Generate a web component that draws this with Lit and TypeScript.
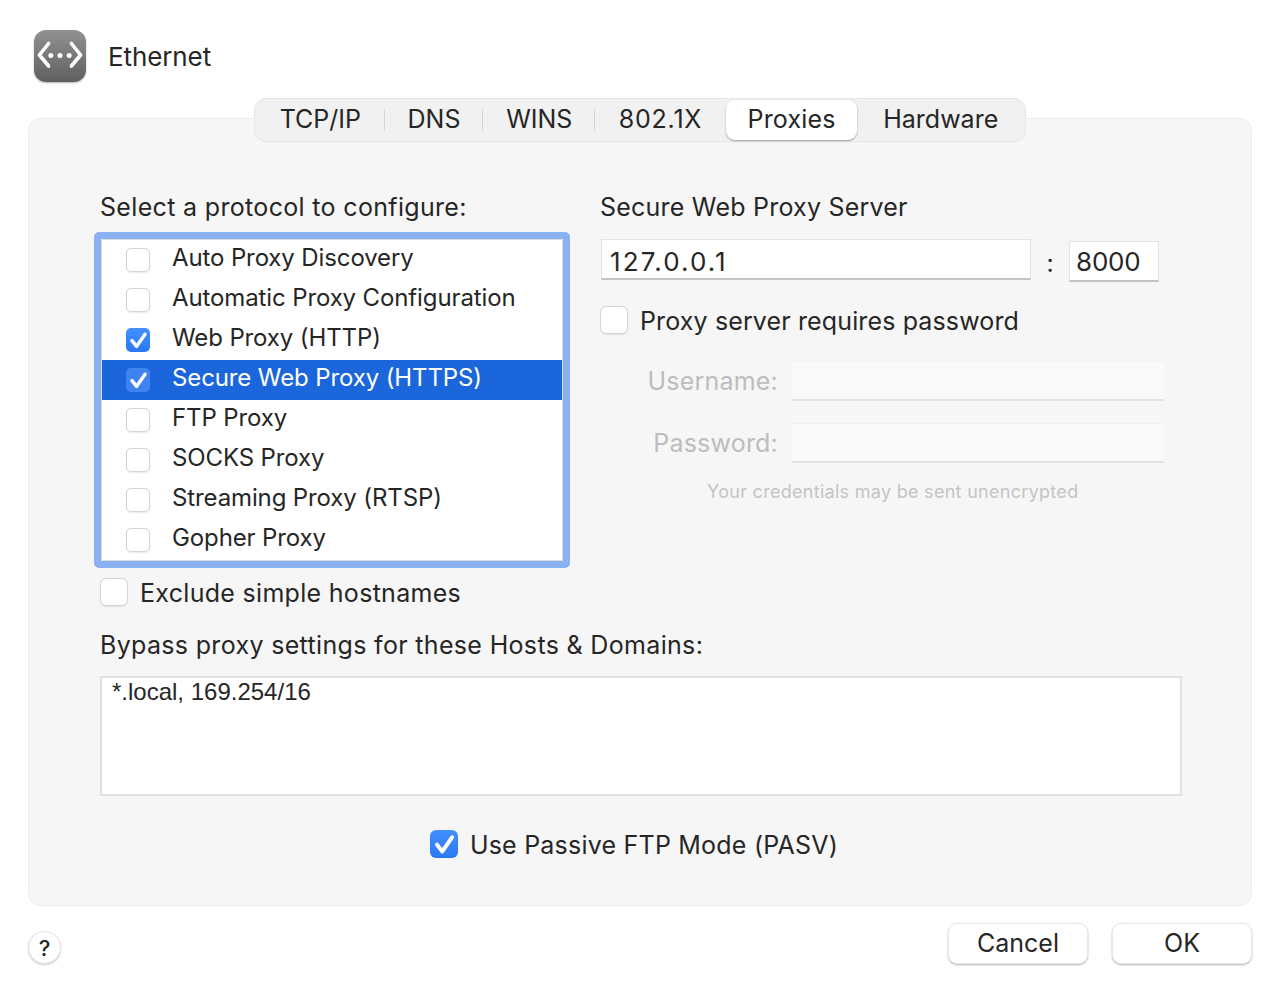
import { LitElement, html, css, svg } from "lit";
import { customElement } from "lit/decorators.js";

const tabs = ["TCP/IP", "DNS", "WINS", "802.1X", "Proxies", "Hardware"];
const protocols: [string, boolean][] = [
  ["Auto Proxy Discovery", false],
  ["Automatic Proxy Configuration", false],
  ["Web Proxy (HTTP)", true],
  ["Secure Web Proxy (HTTPS)", true],
  ["FTP Proxy", false],
  ["SOCKS Proxy", false],
  ["Streaming Proxy (RTSP)", false],
  ["Gopher Proxy", false],
];

const check = svg`<svg viewBox="0 0 24 24" class="tick"><path d="M6 12.6 L10.6 18.4 L19 6.2" fill="none" stroke="#fff" stroke-width="3.4" stroke-linecap="round" stroke-linejoin="round"/></svg>`;

@customElement("app-root")
export class AppRoot extends LitElement {
  static styles = css`
    :host { display: block; width: 1288px; height: 992px; background: #fff; color: #262626; font-family: Inter, "Noto Sans", sans-serif; font-size: 25px; overflow: hidden; }
    * { box-sizing: border-box; }
    .page { display: flex; flex-direction: column; height: 992px; padding: 30px 36px 0 28px; }
    .head { display: flex; align-items: center; gap: 22px; height: 52px; padding-left: 6px; margin-bottom: 36px; font-size: 26px; }
    .head div { padding-top: 1px; letter-spacing: -0.1px; }
    .icon { width: 52px; height: 52px; border-radius: 12px; background: linear-gradient(#929292, #5f5f5f); box-shadow: 0 1px 2px rgba(0,0,0,.3); display: block; }
    .panel { width: 1224px; height: 788px; background: #f6f6f6; border: 1px solid #ececec; border-radius: 12px; display: flex; flex-direction: column; align-items: center; }
    .tabs { margin-top: -21px; width: 772px; height: 44px; flex: none; display: flex; align-items: center; background: #f1f1f1; border: 1px solid #e6e6e6; border-radius: 12px; padding: 0 1px; }
    .tab { height: 40px; display: flex; align-items: center; justify-content: center; position: relative; line-height: 1; padding-bottom: 2px; }
    .tab.sep::after { content: ""; position: absolute; right: 0; top: 9px; height: 22px; width: 1px; background: #d6d6d6; }
    .tab.wide { letter-spacing: .8px; }
    .tab.on { background: #fff; border-radius: 9px; box-shadow: 0 1px 2px rgba(0,0,0,.35); letter-spacing: .2px; }
    .body { width: 100%; display: grid; grid-template-columns: 500px 1fr; padding: 50px 0 0 71px; }
    .title { height: 30px; line-height: 30px; white-space: nowrap; letter-spacing: .33px; }
    .title.r { letter-spacing: .22px; }
    .list { margin: 10px 0 0 -6px; width: 476px; height: 336px; border: 7px solid #8ab1f2; border-radius: 5px; background: #fff; box-shadow: inset 0 0 0 1px #dcdcdc; padding: 1px; }
    .row { height: 40px; display: flex; align-items: center; padding-left: 24px; gap: 22px; font-size: 24px; letter-spacing: -0.12px; }
    .row span { position: relative; top: -3px; white-space: nowrap; }
    .row.sel { background: #1c66db; color: #fff; }
    .cb { flex: none; width: 24px; height: 24px; border-radius: 5px; background: #fff; border: 1px solid #d4d4d4; box-shadow: 0 0.5px 1px rgba(0,0,0,.08); display: block; }
    .cb.big { width: 28px; height: 28px; border-radius: 6px; }
    .cb.on { border: none; background: linear-gradient(#4490ff, #2a78f4); box-shadow: none; }
    .row.sel .cb.on { background: #3f83f0; }
    .tick { width: 100%; height: 100%; display: block; }
    .line { display: flex; align-items: center; gap: 12px; height: 28px; white-space: nowrap; }
    .line span { position: relative; top: 1px; }
    .hostname { margin-top: 10px; letter-spacing: .3px; }
    .right { display: flex; flex-direction: column; }
    .server { display: flex; margin: 17px 0 0 1px; align-items: flex-start; }
    .input { background: #fff; border: 1px solid #e4e4e4; border-bottom: 2px solid #c4c4c4; font-size: 26px; display: flex; align-items: center; white-space: nowrap; }
    .host { width: 430px; height: 41px; padding: 5px 0 0 8px; letter-spacing: 2.1px; }
    .colon { width: 38px; text-align: center; line-height: 48px; }
    .port { width: 90px; height: 41px; margin-top: 2px; padding-left: 6px; letter-spacing: -0.2px; }
    .pw { margin-top: 19px; letter-spacing: .13px; }
    .cred { display: grid; grid-template-columns: 192px 372px; row-gap: 22px; margin-top: 27px; align-items: center; }
    .cred label { text-align: right; padding-right: 14px; color: #bdbdbd; letter-spacing: .2px; }
    .dis { height: 40px; background: #fafafa; border-bottom: 2px solid #e2e2e2; border-top: 1px solid #f0f0f0; }
    .warn { margin: 18px 0 0 107px; font-size: 18px; color: #c4c4c4; letter-spacing: .29px; white-space: nowrap; }
    .bypass { align-self: flex-start; margin: 24px 0 0 71px; height: 30px; line-height: 30px; white-space: nowrap; letter-spacing: .33px; }
    .area { align-self: flex-start; margin: 16px 0 0 71px; width: 1082px; height: 120px; background: #fff; border: 2px solid #e1e1e1; padding: 0 10px; font-size: 24px; font-family: "Liberation Sans", sans-serif; line-height: 28px; }
    .pasv { margin: 34px 12px 0 0; letter-spacing: .22px; }
    .foot { display: flex; justify-content: space-between; align-items: flex-start; width: 1224px; margin-top: 17px; }
    .help { width: 33px; height: 33px; margin-top: 8px; border-radius: 50%; background: #fff; border: 1px solid #e4e4e4; box-shadow: 0 1px 2px rgba(0,0,0,.2); font-size: 22px; font-weight: 500; display: flex; align-items: center; justify-content: center; }
    .btns { display: flex; gap: 24px; }
    .btn { width: 140px; height: 41px; border-radius: 9px; background: #fff; border: 1px solid #e8e8e8; box-shadow: 0 1px 2px rgba(0,0,0,.3); display: flex; align-items: center; justify-content: center; padding-bottom: 2px; }
  `;

  private box(on: boolean, big = false) {
    return html`<i class="cb ${big ? "big" : ""} ${on ? "on" : ""}">${on ? check : ""}</i>`;
  }

  render() {
    const widths = [129, 99, 112, 131, 132, 167];
    return html`<div class="page">
      <div class="head">
        <svg class="icon" viewBox="0 0 52 52">
          <path d="M14.6 13.5 L5.4 25 L14.6 36 M37.4 13.5 L46.6 25 L37.4 36" fill="none" stroke="#fff" stroke-width="3.6" stroke-linecap="round" stroke-linejoin="round"/>
          <circle cx="16.8" cy="25.5" r="2.5" fill="#fff"/><circle cx="26" cy="25.5" r="2.5" fill="#fff"/><circle cx="35.2" cy="25.5" r="2.5" fill="#fff"/>
        </svg>
        <div>Ethernet</div>
      </div>
      <div class="panel">
        <div class="tabs">
          ${tabs.map((t, i) => html`<div class="tab ${t === "Proxies" ? "on" : ""} ${i < 3 ? "sep" : ""} ${t === "802.1X" ? "wide" : ""}" style="width:${widths[i]}px">${t}</div>`)}
        </div>
        <div class="body">
          <div>
            <div class="title">Select a protocol to configure:</div>
            <div class="list">
              ${protocols.map(([p, on], i) => html`<div class="row ${i === 3 ? "sel" : ""}">${this.box(on)}<span>${p}</span></div>`)}
            </div>
            <div class="line hostname">${this.box(false, true)}<span>Exclude simple hostnames</span></div>
          </div>
          <div class="right">
            <div class="title r">Secure Web Proxy Server</div>
            <div class="server">
              <div class="input host">127.0.0.1</div>
              <div class="colon">:</div>
              <div class="input port">8000</div>
            </div>
            <div class="line pw">${this.box(false, true)}<span>Proxy server requires password</span></div>
            <div class="cred">
              <label>Username:</label><div class="dis"></div>
              <label>Password:</label><div class="dis"></div>
            </div>
            <div class="warn">Your credentials may be sent unencrypted</div>
          </div>
        </div>
        <div class="bypass">Bypass proxy settings for these Hosts &amp; Domains:</div>
        <div class="area">*.local, 169.254/16</div>
        <div class="line pasv">${this.box(true, true)}<span>Use Passive FTP Mode (PASV)</span></div>
      </div>
      <div class="foot">
        <div class="help">?</div>
        <div class="btns"><div class="btn">Cancel</div><div class="btn">OK</div></div>
      </div>
    </div>`;
  }
}
